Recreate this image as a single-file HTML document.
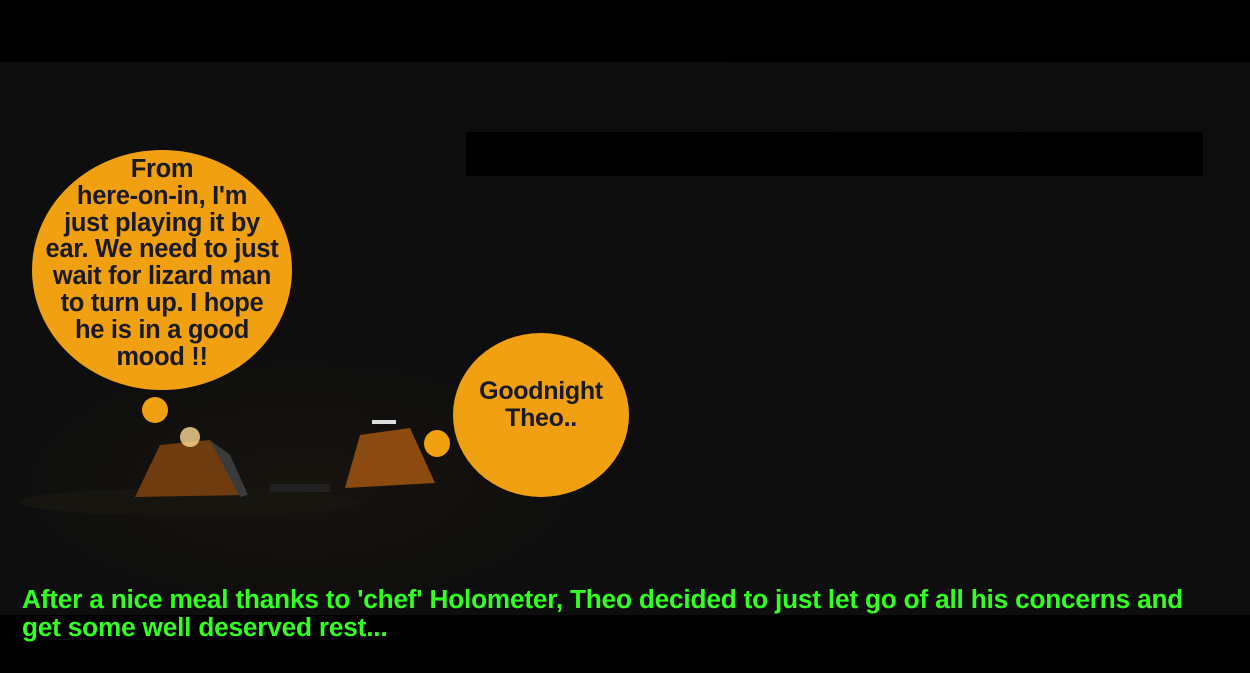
<!DOCTYPE html>
<html><head><style>
body{margin:0;width:1250px;height:673px;background:#000;overflow:hidden;position:relative;font-family:"Liberation Sans",sans-serif;}
.img{position:absolute;left:0;top:62px;width:1250px;height:553px;background:radial-gradient(ellipse at 300px 420px,#17140f 0,#0e0e0e 300px,#0d0d0d 100%);}
.b{position:absolute;background:#f0a010;border-radius:50%;}
.t{position:absolute;font-weight:bold;color:#1a1a22;text-align:center;letter-spacing:-0.3px;}
</style></head><body>
<div class="img"></div>
<div style="position:absolute;left:466px;top:132px;width:737px;height:44px;background:#000"></div>
<svg style="position:absolute;left:0;top:0" width="1250" height="673">
<ellipse cx="190" cy="502" rx="170" ry="14" fill="#17150f"/>
<polygon points="135,497 160,445 210,440 245,495" fill="#6e3c0e"/>
<polygon points="210,440 230,455 248,495 240,497" fill="#3a3a3a"/>
<circle cx="190" cy="437" r="10" fill="#ffd890" opacity="0.8"/>
<polygon points="345,488 360,435 410,428 435,483" fill="#8a4a10"/>
<rect x="372" y="420" width="24" height="4" fill="#ddd"/>
<rect x="270" y="484" width="60" height="8" fill="#222"/>
</svg>
<div class="b" style="left:32px;top:150px;width:260px;height:240px"></div>
<div class="b" style="left:142px;top:397px;width:26px;height:26px"></div>
<div class="b" style="left:453px;top:333px;width:176px;height:164px"></div>
<div class="b" style="left:424px;top:430px;width:26px;height:27px"></div>
<div class="t" style="left:28px;top:156px;width:268px;font-size:25.5px;line-height:26.8px">From<br>here-on-in, I'm<br>just playing it by<br>ear. We need to just<br>wait for lizard man<br>to turn up. I hope<br>he is in a good<br>mood !!</div>
<div class="t" style="left:455px;top:378px;width:172px;font-size:25px;line-height:27px">Goodnight<br>Theo..</div>
<div style="position:absolute;left:22px;top:585px;font-size:26.2px;line-height:28px;font-weight:bold;color:#33ff22;white-space:nowrap;letter-spacing:-0.19px">After a nice meal thanks to 'chef' Holometer, Theo decided to just let go of all his concerns and<br>get some well deserved rest...</div>
</body></html>
